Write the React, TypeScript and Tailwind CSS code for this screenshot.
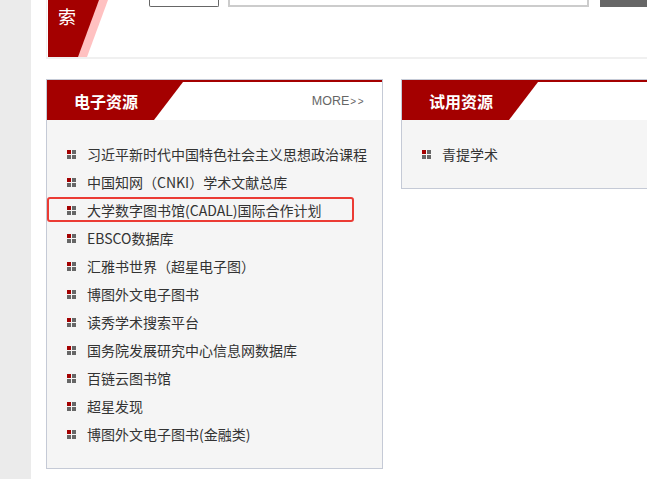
const resources = [
  "习近平新时代中国特色社会主义思想政治课程",
  "中国知网（CNKI）学术文献总库",
  "大学数字图书馆(CADAL)国际合作计划",
  "EBSCO数据库",
  "汇雅书世界（超星电子图）",
  "博图外文电子图书",
  "读秀学术搜索平台",
  "国务院发展研究中心信息网数据库",
  "百链云图书馆",
  "超星发现",
  "博图外文电子图书(金融类)",
];

const trials = ["青提学术"];

const Bullet = () => (
  <span className="grid grid-cols-2 gap-[1px] w-[9px] h-[9px] shrink-0 mr-[11px]">
    <span className="bg-[#a40000]" />
    <span className="bg-[#666666]" />
    <span className="bg-[#666666]" />
    <span className="bg-[#666666]" />
  </span>
);

const Panel = ({ title, more, items, highlight }: any) => {
  return (
    <div className="w-[337px] shrink-0 border border-[#c5cad6] bg-[#f5f5f5]">
      <div className="h-[40px] border-t-2 border-[#a40000] bg-white flex items-center justify-between">
        <div className="h-full w-[136px] bg-[#a40000] [clip-path:polygon(0_0,100%_0,calc(100%-29px)_100%,0_100%)] flex items-center pl-[27px]">
          <span className="text-white font-bold text-[16px] leading-none">{title}</span>
        </div>
        {more && (
          <span className="text-[12.5px] text-[#666] pr-[17px] font-['Liberation_Sans',sans-serif]">
            MORE<span className="text-[10px] tracking-[1.5px] ml-[1px]">&gt;&gt;</span>
          </span>
        )}
      </div>
      <ul className="pt-[20px] pb-[20px]">
        {items.map((item: string, i: number) => (
          <li key={item} className="relative flex items-center h-[28px] pl-[20px] text-[14px] text-[#333]">
            <Bullet />
            <span>{item}</span>
            {highlight === i && (
              <span className="absolute left-0 top-[1px] w-[307px] h-[25px] border-2 border-[#eb3b34] rounded-[3px]" />
            )}
          </li>
        ))}
      </ul>
    </div>
  );
};

export default function App() {
  return (
    <div className="flex w-[647px] h-[479px] overflow-hidden bg-white font-['Noto_Sans_CJK_SC','Noto_Sans',sans-serif]">
      <div className="w-[31px] shrink-0 bg-[#ebebeb]" />
      <div className="flex-1 pl-[15px] overflow-hidden">
        <div className="w-[700px] h-[59px] border-l border-b-2 border-[#f0f0f0] flex">
          <div className="ml-[1px] w-[60px] h-[57px] bg-[#ffc1c1] [clip-path:polygon(0_0,100%_0,calc(100%-21px)_100%,0_100%)]">
            <div className="w-[51px] h-full bg-[#a40000] [clip-path:polygon(0_0,100%_0,calc(100%-21px)_100%,0_100%)] pl-[10px] pt-[4px]">
              <span className="text-white text-[18px] leading-[24px]">索</span>
            </div>
          </div>
          <div className="ml-[41px] w-[70px] h-[7px] border border-t-0 border-[#666] rounded-b-[2px] bg-white" />
          <div className="ml-[9px] w-[361px] h-[7px] border-2 border-t-0 border-[#cccccc] bg-white" />
          <div className="ml-[11px] w-[60px] h-[7px] bg-[#666666]" />
        </div>
        <div className="flex gap-[18px] mt-[20px] items-start">
          <Panel title="电子资源" more items={resources} highlight={2} />
          <Panel title="试用资源" items={trials} />
        </div>
      </div>
    </div>
  );
}
